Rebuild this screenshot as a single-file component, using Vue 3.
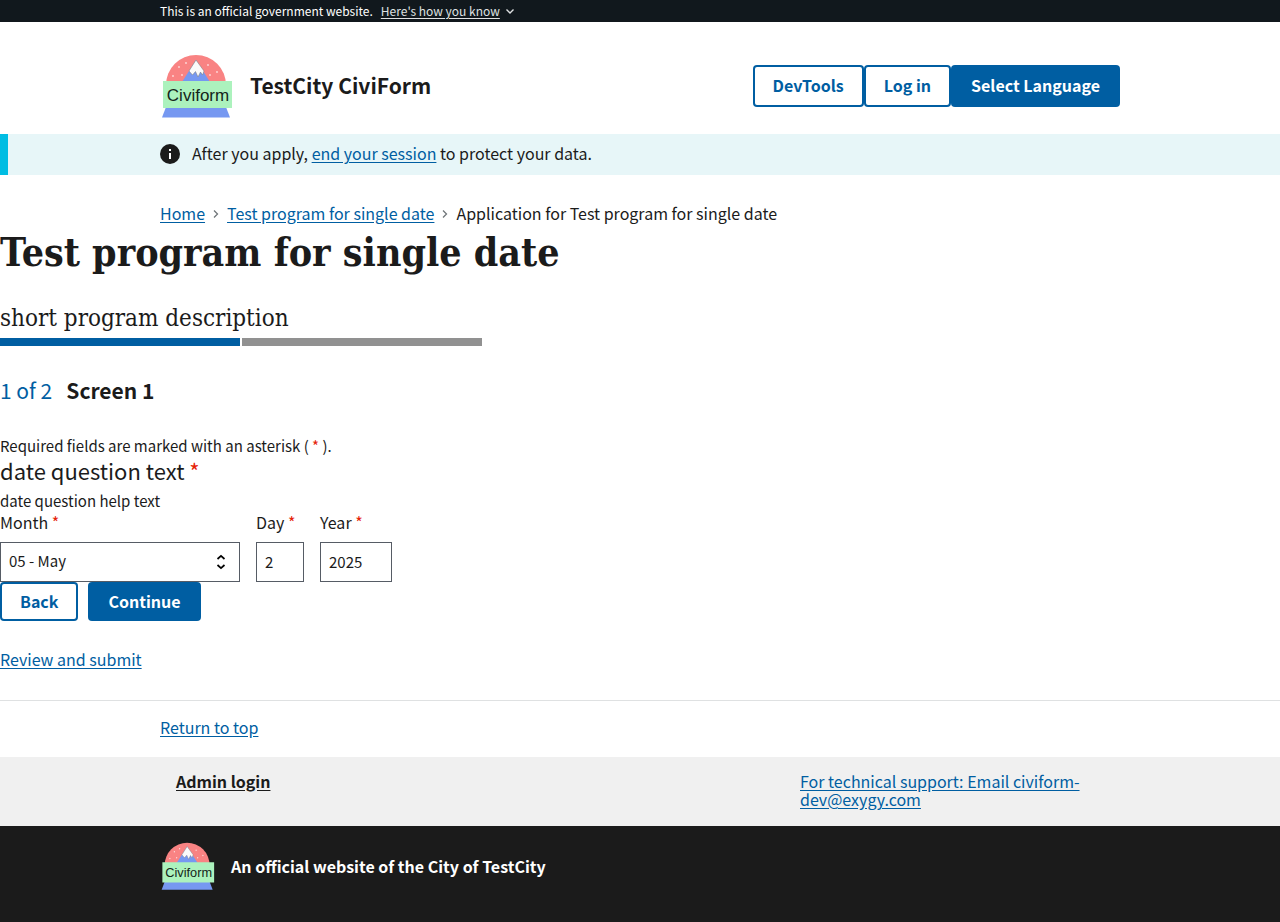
<script setup>
import { ref, h } from 'vue'

const month = ref('05')
const day = ref('2')
const year = ref('2025')
const months = [
  ['01', 'January'], ['02', 'February'], ['03', 'March'], ['04', 'April'],
  ['05', 'May'], ['06', 'June'], ['07', 'July'], ['08', 'August'],
  ['09', 'September'], ['10', 'October'], ['11', 'November'], ['12', 'December'],
]

const flakes = [[19, 13], [26, 9], [13, 22], [22, 21], [48, 11], [57, 18], [50, 21]]
const CiviLogo = () => h('svg', { viewBox: '0 0 73 64', role: 'img', 'aria-label': 'Civiform' }, [
  h('circle', { cx: 36, cy: 31, r: 30, fill: '#f98383' }),
  ...flakes.map(([cx, cy]) => h('circle', { cx, cy, r: 0.9, fill: '#fff', 'fill-opacity': 0.7 })),
  h('path', { d: 'M22 28L36 6 50 28z', fill: '#7698f1' }),
  h('path', { d: 'M36 6L29 17 32.500 21 35.500 17.500 38 23 40.500 18 42.500 21 44 17z', fill: '#fafafa', stroke: '#777', 'stroke-width': 0.5 }),
  h('path', { d: 'M6 53h60l4 10.500H2z', fill: '#7698f1' }),
  h('path', { d: 'M3 27h69v27H3z', fill: '#acf2bd' }),
  h('text', { x: 38, y: 47, 'text-anchor': 'middle', 'font-family': 'Liberation Sans, sans-serif', 'font-size': 17, 'font-weight': 400, fill: '#15251a' }, 'Civiform'),
])
</script>

<template>
  <div id="top" class="page">
    <section class="banner" aria-label="Official government website">
      <div class="container banner-inner">
        <span>This is an official government website.</span>
        <button type="button" class="banner-button"><span>Here's how you know</span>
          <svg width="8" height="5" viewBox="0 0 8 5" aria-hidden="true"><path d="M.5.5L4 4 7.500.5" fill="none" stroke="#dfe1e2" stroke-width="1.400" /></svg>
        </button>
      </div>
    </section>

    <header class="container header">
      <div class="brand">
        <CiviLogo class="logo" />
        <span class="brand-name">TestCity CiviForm</span>
      </div>
      <nav class="header-actions">
        <button type="button" class="btn outline">DevTools</button>
        <button type="button" class="btn outline">Log in</button>
        <button type="button" class="btn">Select Language</button>
      </nav>
    </header>

    <div class="alert">
      <div class="container alert-inner">
        <svg width="20" height="20" viewBox="0 0 20 20" aria-hidden="true">
          <circle cx="10" cy="10" r="10" fill="#1b1b1b" />
          <path d="M9 5h2v2H9zM9 9h2v6H9z" fill="#fff" />
        </svg>
        <p>After you apply, <a href="#">end your session</a> to protect your data.</p>
      </div>
    </div>

    <nav class="container" aria-label="Breadcrumbs">
      <ol class="crumbs">
        <li><a href="#">Home</a></li>
        <li><svg width="6" height="8" viewBox="0 0 6 8" aria-hidden="true"><path d="M1 .5L4.500 4 1 7.500" fill="none" stroke="#71767a" stroke-width="1.300" /></svg><a href="#">Test program for single date</a></li>
        <li><svg width="6" height="8" viewBox="0 0 6 8" aria-hidden="true"><path d="M1 .5L4.500 4 1 7.500" fill="none" stroke="#71767a" stroke-width="1.300" /></svg><span>Application for Test program for single date</span></li>
      </ol>
    </nav>

    <main>
      <h1>Test program for single date</h1>
      <p class="description">short program description</p>
      <div class="progress" aria-hidden="true"><span class="done"></span><span></span></div>
      <h2><span class="step">1 of 2</span> <span>Screen 1</span></h2>
      <form @submit.prevent>
        <p class="note">Required fields are marked with an asterisk ( <span class="req">*</span> ).</p>
        <fieldset>
          <legend>date question text <span class="req">*</span></legend>
          <p class="help">date question help text</p>
          <div class="date-row">
            <div class="field month">
              <label for="month">Month <span class="req">*</span></label>
              <div class="select-wrap">
                <select id="month" v-model="month">
                  <option v-for="[n, name] in months" :key="n" :value="n">{{ n }} - {{ name }}</option>
                </select>
                <svg class="arrows" width="10" height="16" viewBox="0 0 10 16" aria-hidden="true"><path d="M1.500 5L5 1.800 8.500 5M1.500 11L5 14.200 8.500 11" fill="none" stroke="#000" stroke-width="1.700" /></svg>
              </div>
            </div>
            <div class="field day">
              <label for="day">Day <span class="req">*</span></label>
              <input id="day" v-model="day" type="text" inputmode="numeric" maxlength="2" />
            </div>
            <div class="field year">
              <label for="year">Year <span class="req">*</span></label>
              <input id="year" v-model="year" type="text" inputmode="numeric" maxlength="4" />
            </div>
          </div>
        </fieldset>
        <div class="form-actions">
          <button type="button" class="btn outline">Back</button>
          <button type="submit" class="btn">Continue</button>
        </div>
        <a href="#" class="review">Review and submit</a>
      </form>
    </main>

    <footer>
      <div class="return"><div class="container"><a href="#top">Return to top</a></div></div>
      <div class="footer-primary">
        <div class="container footer-cols">
          <a href="#" class="admin">Admin login</a>
          <a href="#" class="support">For technical support: Email civiform-dev@exygy.com</a>
        </div>
      </div>
      <div class="identifier">
        <div class="container identifier-inner">
          <CiviLogo class="logo small" />
          <span>An official website of the City of TestCity</span>
        </div>
      </div>
    </footer>
  </div>
</template>

<style>
body { margin: 0; background: #fff; }
</style>

<style scoped>
* { box-sizing: border-box; }
.page {
  font-family: "Noto Sans CJK SC", "Open Sans", sans-serif;
  font-size: 16px;
  line-height: 20px;
  color: #1b1b1b;
  min-height: 100vh;
  display: flex;
  flex-direction: column;
}
p, h1, h2 { margin: 0; }
a { color: #005ea2; text-underline-offset: 2px; }
button, input, select { font: inherit; color: inherit; }
.container { width: 100%; max-width: 1024px; margin: 0 auto; padding: 0 32px; }

.banner { background: #11181d; color: #fff; font-size: 12px; line-height: 22px; }
.banner-inner { display: flex; gap: 8px; }
.banner-button { display: flex; align-items: center; gap: 6px; border: 0; padding: 0; background: none; color: #dfe1e2; }
.banner-button span { text-decoration: underline; text-underline-offset: 2px; }

.header { display: flex; justify-content: space-between; align-items: center; padding-top: 32px; padding-bottom: 16px; }
.brand { display: flex; align-items: center; gap: 17px; }
.logo { width: 73px; height: 64px; }
.brand-name { font-size: 21px; line-height: 28px; font-weight: 700; padding-bottom: 2px; }
.header-actions { display: flex; }
.btn {
  height: 42px; padding: 0 20px 2px; border: 0; border-radius: 4px;
  background: #005ea2; color: #fff; font-weight: 700;
}
.btn.outline { background: #fff; color: #005ea2; box-shadow: inset 0 0 0 2px #005ea2; }

.alert { background: #e7f6f8; border-left: 8px solid #00bde3; }
.alert-inner { display: flex; gap: 12px; padding-top: 10px; padding-bottom: 11px; line-height: 18px; }
.alert .container { max-width: 1032px; }

.crumbs { display: flex; list-style: none; margin: 0; padding: 28px 0 8px; }
.crumbs li { display: flex; align-items: center; }
.crumbs svg { margin: 2px 8px 0; }

h1 { font-family: "DejaVu Serif Condensed", "DejaVu Serif", serif; font-size: 39px; line-height: 42px; }
.description { font-family: "DejaVu Serif Condensed", "DejaVu Serif", serif; font-size: 24px; line-height: 28px; margin-top: 31px; }
.progress { display: flex; gap: 2px; margin-top: 6px; }
.progress span { flex: 0 0 240px; height: 8px; background: #919191; }
.progress .done { background: #005ea2; }
h2 { font-size: 21px; line-height: 28px; margin-top: 30px; display: flex; gap: 14px; }
.step { color: #005ea2; font-weight: 400; }
.note { font-size: 15px; margin-top: 32px; }
.req { color: #e52207; }
fieldset { border: 0; margin: 0; padding: 0; }
legend { padding: 0; font-size: 22px; line-height: 28px; }
.help { font-size: 15px; margin-top: 7px; }
.date-row { display: flex; gap: 16px; }
.field label { display: block; line-height: 22px; margin-bottom: 9px; }
.month { width: 240px; }
.day { width: 48px; }
.year { width: 72px; }
.field input, .field select {
  display: block; width: 100%; height: 40px; padding: 0 8px 2px; margin: 0; font-size: 15px;
  border: 1px solid #565c65; border-radius: 0; background: #fff; appearance: none; outline: 0;
}
.select-wrap { position: relative; }
.arrows { position: absolute; right: 14px; top: 12px; pointer-events: none; }
.form-actions { display: flex; gap: 10px; }
.form-actions .btn { height: 39px; }
.review { display: inline-block; margin: 28px 0 31px; }

.return { border-top: 1px solid #dfe1e2; padding: 16px 0 20px; }
footer { flex: 1; display: flex; flex-direction: column; }
.footer-primary { background: #f0f0f0; padding: 15px 0 18px; line-height: 18px; }
.footer-cols { display: grid; grid-template-columns: 2fr 1fr; align-items: start; }
.admin { color: #1b1b1b; font-weight: 700; padding-left: 16px; }
.support { padding-right: 32px; }
.identifier { background: #1b1b1b; color: #fff; font-weight: 700; padding: 16px 0; flex: 1; }
.identifier-inner { display: flex; align-items: center; gap: 16px; }
.logo.small { width: 55px; height: 48px; }
</style>
